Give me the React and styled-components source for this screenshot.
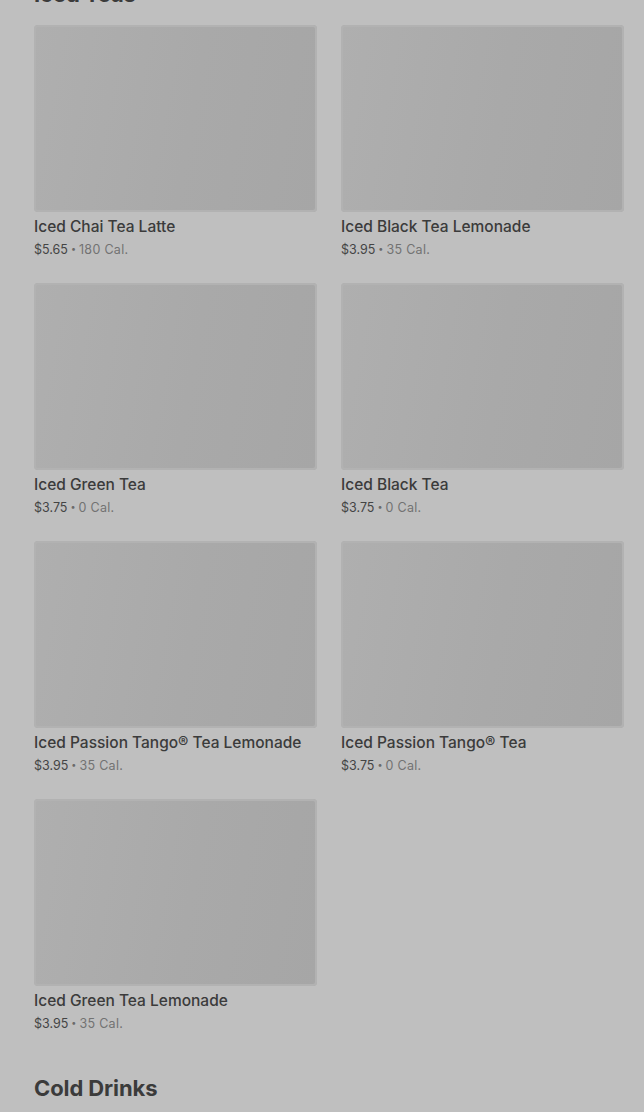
import React from "react";
import styled, { createGlobalStyle } from "styled-components";

const GlobalStyle = createGlobalStyle`
  html, body {
    margin: 0;
    padding: 0;
    background-color: #bfbfbf;
    font-family: Inter, "Noto Sans", "Liberation Sans", sans-serif;
    overflow: hidden;
  }
`;

const Page = styled.div`
  padding: 0 20px 0 34px;
  margin-top: -20px;
`;

const Section = styled.section`
  margin-bottom: 41px;
`;

const Heading = styled.h2`
  margin: 0 0 17px;
  font-size: 22px;
  line-height: 28px;
  font-weight: 700;
  letter-spacing: -0.1px;
  color: #3b3b3b;
`;

const Grid = styled.div`
  display: grid;
  grid-template-columns: 283px 283px;
  column-gap: 24px;
  row-gap: 24px;
`;

const Card = styled.div`
  display: flex;
  flex-direction: column;
`;

const Picture = styled.div`
  height: 187px;
  border-radius: 4px;
  background: linear-gradient(100deg, #afafaf 0%, #a9a9a9 55%, #a6a6a6 100%);
  box-shadow: inset 0 0 0 2px #b2b2b2;
`;

const Title = styled.div`
  margin-top: 5px;
  font-size: 15.5px;
  line-height: 20px;
  font-weight: 500;
  letter-spacing: 0;
  color: #3b3b3b;
`;

const Meta = styled.div`
  margin-top: 4px;
  height: 18px;
  font-size: 12.5px;
  line-height: 18px;
  color: #444444;
`;

const Cal = styled.span`
  color: #727272;
  letter-spacing: 0.3px;
`;

const Dot = styled.span`
  margin: 0 3px;
  font-size: 9px;
  line-height: 0;
  vertical-align: 2px;
  color: #6a6a6a;
`;

const teas = [
  { name: "Iced Chai Tea Latte", price: "$5.65", cal: "180 Cal." },
  { name: "Iced Black Tea Lemonade", price: "$3.95", cal: "35 Cal." },
  { name: "Iced Green Tea", price: "$3.75", cal: "0 Cal." },
  { name: "Iced Black Tea", price: "$3.75", cal: "0 Cal." },
  { name: "Iced Passion Tango® Tea Lemonade", price: "$3.95", cal: "35 Cal." },
  { name: "Iced Passion Tango® Tea", price: "$3.75", cal: "0 Cal." },
  { name: "Iced Green Tea Lemonade", price: "$3.95", cal: "35 Cal." },
];

export default function App() {
  return (
    <>
      <GlobalStyle />
      <Page>
        <Section>
          <Heading>Iced Teas</Heading>
          <Grid>
            {teas.map((t) => (
              <Card key={t.name}>
                <Picture />
                <Title>{t.name}</Title>
                <Meta>
                  {t.price}
                  <Dot>•</Dot>
                  <Cal>{t.cal}</Cal>
                </Meta>
              </Card>
            ))}
          </Grid>
        </Section>
        <Section>
          <Heading>Cold Drinks</Heading>
        </Section>
      </Page>
    </>
  );
}
